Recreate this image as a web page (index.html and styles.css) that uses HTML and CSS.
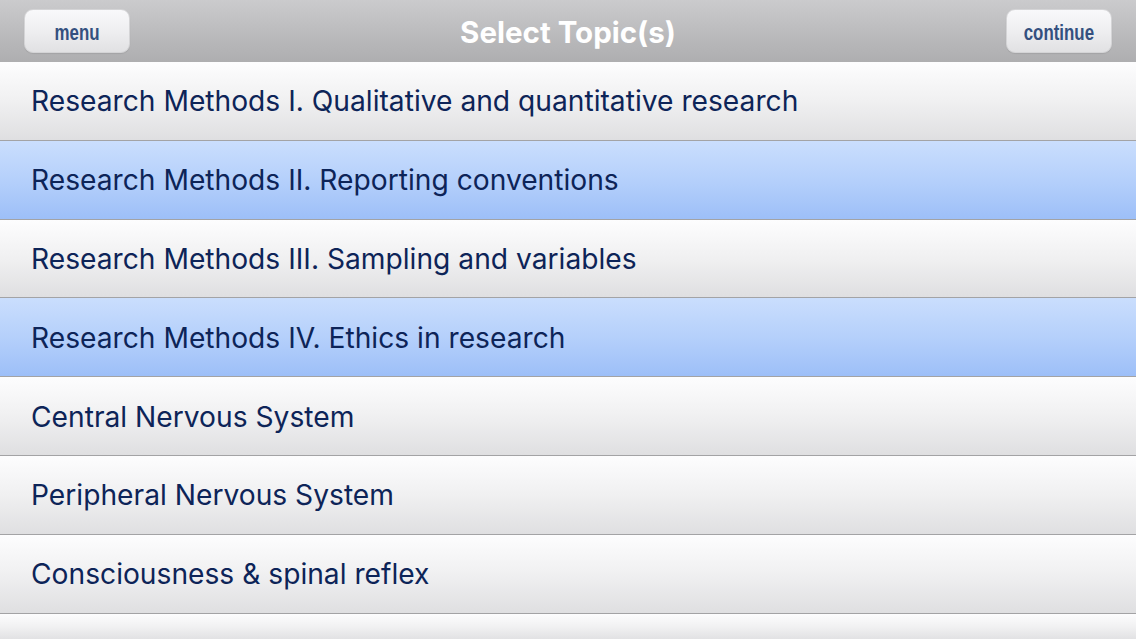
FILE: index.html
```html
<!DOCTYPE html>
<html lang="en">
<head>
  <meta charset="UTF-8" />
  <meta name="viewport" content="width=device-width, initial-scale=1" />
  <title>Select Topic(s)</title>
  <link rel="stylesheet" href="styles.css">
</head>
<body>

  <div class="top-bar">
    <button class="bar-btn"><span>menu</span></button>
    <h1 class="title">Select Topic(s)</h1>
    <button class="bar-btn"><span>continue</span></button>
  </div>

  <ul class="topic-list">
    <li class="topic">Research Methods I. Qualitative and quantitative research</li>
    <li class="topic selected">Research Methods II. Reporting conventions</li>
    <li class="topic">Research Methods III. Sampling and variables</li>
    <li class="topic selected">Research Methods IV. Ethics in research</li>
    <li class="topic">Central Nervous System</li>
    <li class="topic">Peripheral Nervous System</li>
    <li class="topic">Consciousness &amp; spinal reflex</li>
    <li class="topic last"></li>
  </ul>

</body>
</html>
```

FILE: styles.css
```css
body {
  margin: 0;
  padding: 0;
  width: 1136px;
  height: 639px;
  overflow: hidden;
  background: #f4f4f6;
  font-family: Inter, "Noto Sans", sans-serif;
}
.top-bar {
  height: 62px;
  box-sizing: border-box;
  padding: 9px 24px 0 24px;
  display: flex;
  align-items: flex-start;
  justify-content: space-between;
  background: linear-gradient(to bottom, #cbcbcd 0%, #b9b9bb 60%, #aeaeb0 100%);
}
.bar-btn {
  width: 106px;
  height: 44px;
  border-radius: 9px;
  border: 1px solid #d4d4d6;
  background: linear-gradient(to bottom, #f9f9fb 0%, #ededef 55%, #e1e1e3 100%);
  color: #34507f;
  font-family: "Liberation Sans", Arial, sans-serif;
  font-weight: bold;
  font-size: 22.5px;
  padding: 3px 0 0 0;
  box-shadow: 0 1px 1px rgba(0, 0, 0, 0.08);
}
.bar-btn span {
  display: inline-block;
  transform: scaleX(0.75);
}
.title {
  margin: 0;
  padding-top: 9px;
  font-size: 29.5px;
  font-weight: 700;
  color: #ffffff;
  line-height: 1;
}
.topic-list {
  list-style: none;
  margin: 0;
  padding: 0;
}
.topic {
  height: 76.8px;
  box-sizing: content-box;
  border-bottom: 2px solid #a3a3a5;
  padding-left: 31px;
  padding-top: 1px;
  margin-top: -1px;
  display: flex;
  align-items: center;
  font-size: 28.2px;
  color: #0d2458;
  background: linear-gradient(to bottom, #fdfdfe 0%, #f0f0f1 50%, #dfdfe1 100%);
}
.topic:first-child {
  margin-top: 0;
}
.topic.selected {
  background: linear-gradient(to bottom, #cadefd 0%, #b5d0fb 50%, #9dbff8 100%);
}
.topic.last {
  height: 26px;
  border-bottom: none;
}
```
